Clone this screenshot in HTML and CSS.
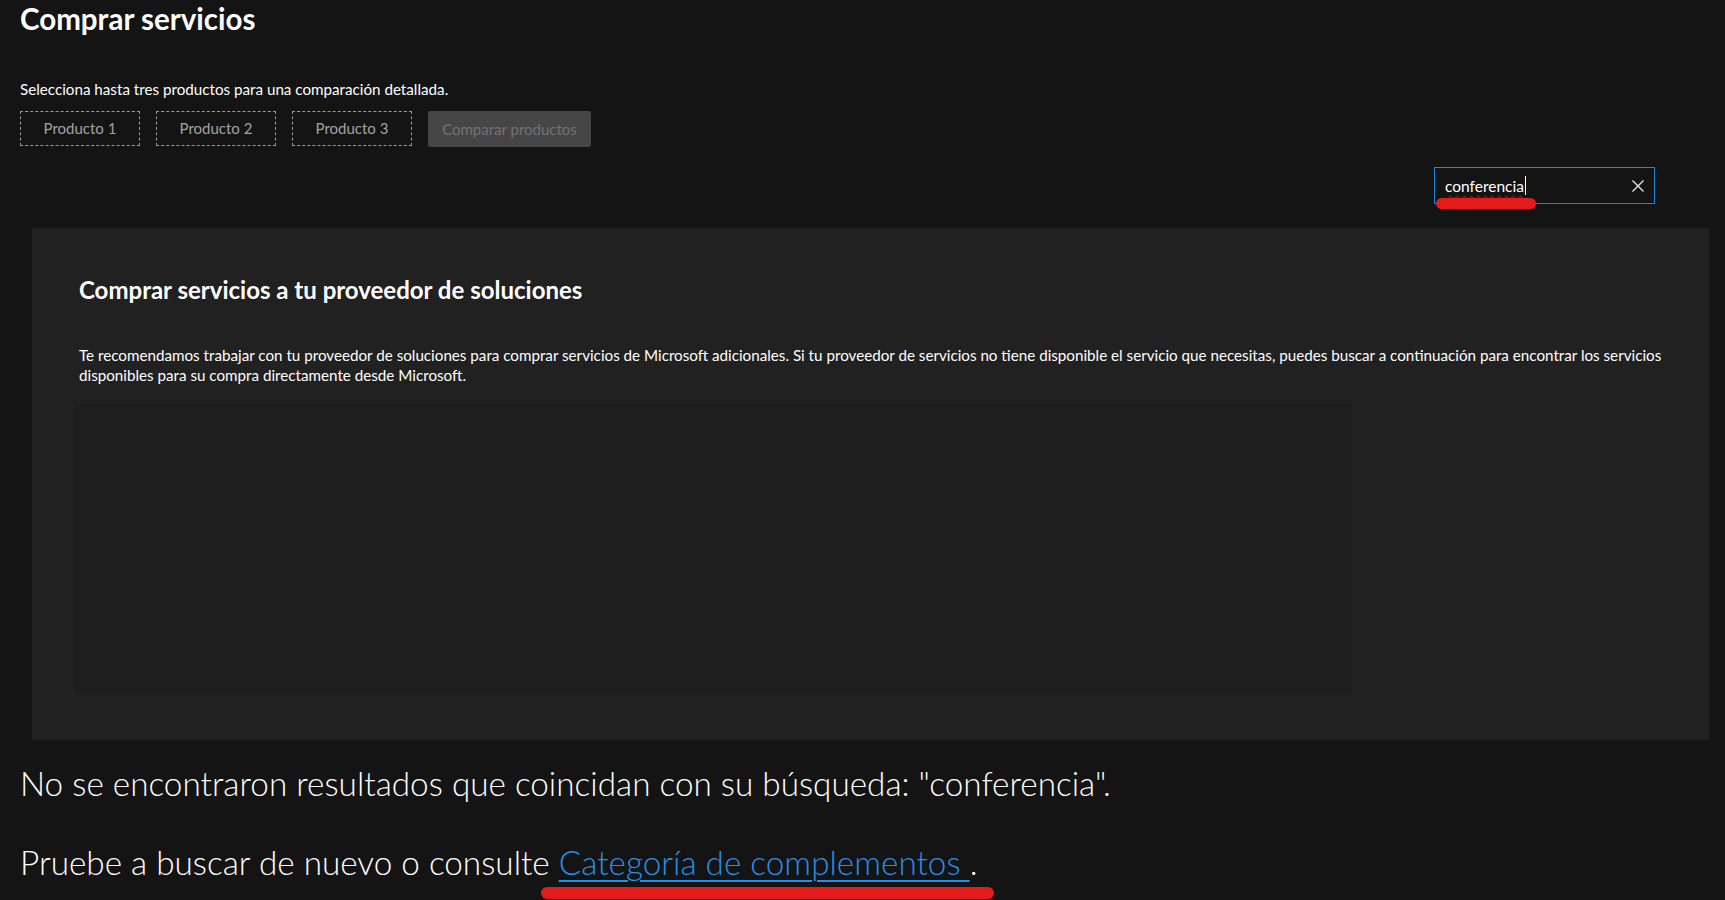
FILE: index.html
```html
<!DOCTYPE html>
<html lang="es">

<head>
    <meta charset="UTF-8">
    <meta name="viewport" content="width=device-width, initial-scale=1.0">
    <title>Comprar servicios</title>
    <link rel="stylesheet" href="styles.css">
</head>

<body>
    <div class="page">
        <h1 class="title">Comprar servicios</h1>

        <div class="compare">
            <div class="compare-text">Selecciona hasta tres productos para una comparación detallada.</div>
            <div class="slots">
                <div class="slot">Producto 1</div>
                <div class="slot">Producto 2</div>
                <div class="slot">Producto 3</div>
                <div class="btn-compare">Comparar productos</div>
            </div>
        </div>

        <div class="search-row">
            <div class="search">
                <span class="search-value">conferencia</span><span class="caret"></span>
                <svg class="clear" width="14" height="14" viewBox="0 0 14 14">
                    <path d="M1.5 1.5 L12.5 12.5 M12.5 1.5 L1.5 12.5" stroke="#e6e6e6" stroke-width="1.4" fill="none" />
                </svg>
                <div class="mark mark-search"></div>
            </div>
        </div>

        <div class="panel">
            <h2 class="panel-title">Comprar servicios a tu proveedor de soluciones</h2>
            <p class="panel-text">Te recomendamos trabajar con tu proveedor de soluciones para comprar servicios de Microsoft adicionales. Si tu proveedor de servicios no tiene disponible el servicio que necesitas, puedes buscar a continuación para encontrar los servicios disponibles para su compra directamente desde Microsoft.</p>
            <div class="panel-box"></div>
        </div>

        <div class="empty">
            <p class="empty-line">No se encontraron resultados que coincidan con su búsqueda: "conferencia".</p>
            <p class="empty-line retry">Pruebe a buscar de nuevo o consulte <a class="link" href="#">Categoría de complementos </a>.
                <span class="mark mark-link"></span>
            </p>
        </div>
    </div>
</body>

</html>
```

FILE: styles.css
```css
body {
    margin: 0;
    background-color: #141414;
    color: #fff;
    font-family: "Lato", "Open Sans", sans-serif;
}

.page {
    height: 900px;
    overflow: hidden;
}

.title {
    margin: 0;
    padding: 1px 20px 0;
    font-size: 29.5px;
    font-weight: 700;
    line-height: 36px;
}

.compare {
    padding: 0 20px;
    margin-top: 42px;
}

.compare-text {
    font-size: 15.2px;
    line-height: 20px;
}

.slots {
    display: flex;
    gap: 16px;
    margin-top: 12px;
}

.slot {
    width: 118px;
    height: 33px;
    border: 1px dashed #9a9a9a;
    color: #a3a3a3;
    font-size: 15px;
    line-height: 33px;
    text-align: center;
}

.btn-compare {
    width: 163px;
    height: 36px;
    background-color: #464646;
    color: #727272;
    border-radius: 2px;
    font-size: 15px;
    line-height: 36px;
    text-align: center;
}

.search-row {
    display: flex;
    justify-content: flex-end;
    padding-right: 70px;
    margin-top: 20px;
}

.search {
    position: relative;
    width: 209px;
    height: 35px;
    border: 1px solid #1a87dd;
    display: flex;
    align-items: center;
    padding: 0 0 0 10px;
}

.search-value {
    font-size: 15.5px;
    color: #fff;
    text-decoration: underline wavy #b41c1c;
    text-decoration-thickness: 1px;
    text-underline-offset: 3px;
}

.caret {
    width: 1px;
    height: 19px;
    background-color: #fff;
    margin-left: 1px;
}

.clear {
    margin-left: auto;
    margin-right: 9px;
}

.mark {
    position: absolute;
    background-color: #e31b1b;
    border-radius: 6px;
}

.mark-search {
    left: 1px;
    top: 30px;
    width: 100px;
    height: 11px;
}

.panel {
    margin: 24px 16px 0 32px;
    background-color: #212121;
    padding: 46px 43px 47px 43px;
}

.panel-title {
    margin: 0;
    padding-left: 4px;
    font-size: 24px;
    font-weight: 700;
    line-height: 32px;
}

.panel-text {
    margin: 39px 0 0;
    padding-left: 4px;
    font-size: 15.2px;
    line-height: 20px;
}

.panel-box {
    width: 1277px;
    height: 289px;
    margin-top: 19px;
    background-color: #1e1e1e;
}

.empty {
    padding: 0 20px;
}

.empty-line {
    margin: 0;
    font-size: 33.3px;
    font-weight: 300;
    line-height: 44px;
}

.empty-line:first-child {
    margin-top: 21px;
}

.retry {
    position: relative;
    margin-top: 35px;
}

.link {
    color: #2590e8;
    text-decoration: underline;
    text-decoration-thickness: 2px;
    text-underline-offset: 5px;
}

.mark-link {
    left: 521px;
    top: 47px;
    width: 453px;
    height: 12px;
}
```
